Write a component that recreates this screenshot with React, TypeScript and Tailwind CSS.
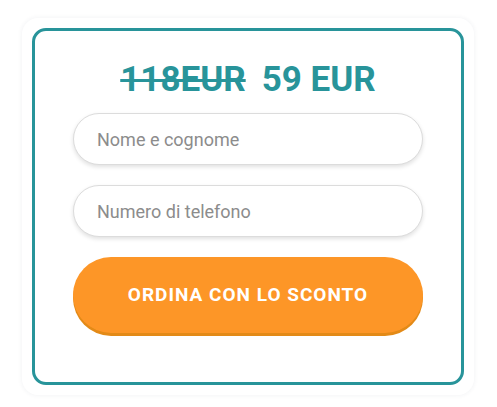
export default function App() {
  return (
    <div className="min-h-screen bg-white px-[22px] pt-[18px] font-['Roboto',sans-serif]">
      <div className="w-[452px] rounded-2xl bg-white p-[10px] shadow-[0_0_5px_rgba(40,60,90,0.07)]">
        <div className="rounded-[14px] border-[3px] border-[#28949a] px-[38px] pb-[49px] pt-[31px]">
          <div className="flex justify-center gap-4 text-[35px] font-bold leading-none text-[#28949a]">
            <span className="line-through decoration-[3px]">118EUR</span>
            <span>59 EUR</span>
          </div>
          <form className="mt-[16px] flex flex-col gap-5" onSubmit={(e) => e.preventDefault()}>
            <input
              type="text"
              placeholder="Nome e cognome"
              className="h-[52px] w-full rounded-full border border-[#dcdcdc] bg-white px-[23px] text-[18px] text-[#444] shadow-[0_2px_4px_rgba(0,0,0,0.12)] outline-none placeholder:text-[#8c8c8c]"
            />
            <input
              type="tel"
              placeholder="Numero di telefono"
              className="h-[52px] w-full rounded-full border border-[#dcdcdc] bg-white px-[23px] text-[18px] text-[#444] shadow-[0_2px_4px_rgba(0,0,0,0.12)] outline-none placeholder:text-[#8c8c8c]"
            />
            <button
              type="submit"
              className="h-[76px] w-full rounded-full bg-[#fd9627] text-[19px] font-bold uppercase tracking-[1px] text-white shadow-[0_3px_0_#e38a17]"
            >
              Ordina con lo sconto
            </button>
          </form>
        </div>
      </div>
    </div>
  );
}
